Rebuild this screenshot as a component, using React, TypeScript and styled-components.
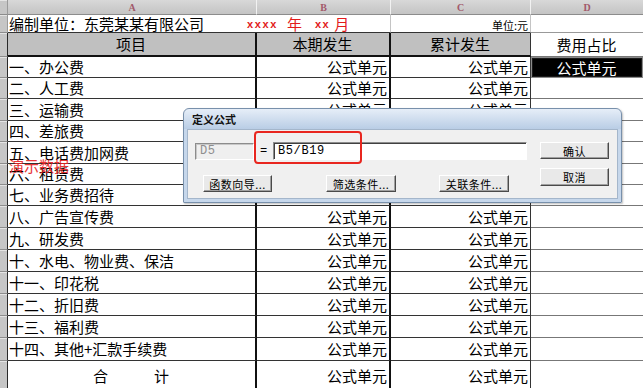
import React from "react";
import styled, { createGlobalStyle } from "styled-components";

const GlobalStyle = createGlobalStyle`
  html, body {
    margin: 0;
    padding: 0;
    background: #fff;
    overflow: hidden;
  }
  body {
    font-family: "Noto Sans CJK SC", "Noto Sans", sans-serif;
  }
`;

// column widths: row header, A, B, C, D
const COLS = "8px 249px 134px 140px 112px";

const Sheet = styled.div`
  position: relative;
  width: 643px;
  height: 388px;
  overflow: hidden;
  background: #fff;
  color: #000;
`;

const Row = styled.div<{ $h: number }>`
  display: grid;
  grid-template-columns: ${COLS};
  height: ${(p) => p.$h}px;
`;

const RowHead = styled.div<{ $light?: boolean }>`
  box-sizing: border-box;
  background: #c6c6c6;
  border-right: 1px solid ${(p) => (p.$light ? "#9a9a9a" : "#2a2a2a")};
  border-bottom: 1px solid #8c8c8c;
  box-shadow: inset 0 1px #e4e4e4;
`;

const ColLetter = styled.div<{ $last?: boolean }>`
  box-sizing: border-box;
  display: flex;
  align-items: center;
  justify-content: center;
  background: linear-gradient(#d8d8d8, #c4c4c4);
  border-right: ${(p) => (p.$last ? "none" : "1px solid #f2f2f2")};
  border-bottom: 1px solid #8c8c8c;
  font-family: "Liberation Serif", serif;
  font-size: 10px;
  font-weight: bold;
  color: #a2596a;
`;

type Align = "left" | "center" | "right";

const Cell = styled.div<{
  $align?: Align;
  $bg?: string;
  $right?: string;
  $bottom?: string;
  $span?: number;
}>`
  box-sizing: border-box;
  display: flex;
  align-items: center;
  justify-content: ${(p) =>
    p.$align === "right" ? "flex-end" : p.$align === "center" ? "center" : "flex-start"};
  grid-column: span ${(p) => p.$span ?? 1};
  padding: 0 2px 0 1px;
  background: ${(p) => p.$bg ?? "#fff"};
  border-right: ${(p) => p.$right ?? "none"};
  border-bottom: ${(p) => p.$bottom ?? "none"};
  font-size: 15px;
  line-height: 16px;
  white-space: nowrap;
`;

const SelectedCell = styled(Cell)`
  background: #000;
  color: #fff;
  border: 1px solid #8a8a8a;
  box-shadow: inset 0 0 0 1px #1a1a1a;
`;

const Company = styled.span`
  width: 238px;
  flex: none;
`;

const DateX = styled.span<{ $ml: number }>`
  margin-left: ${(p) => p.$ml}px;
  font-family: "Liberation Sans", sans-serif;
  font-size: 11px;
  line-height: 12px;
  font-weight: bold;
  letter-spacing: 1.6px;
  color: #e21b1b;
  align-self: flex-end;
  padding-bottom: 2px;
`;

const DateWord = styled.span<{ $ml: number }>`
  margin-left: ${(p) => p.$ml}px;
  font-size: 15px;
  color: #e21b1b;
`;

const Unit = styled.span`
  font-size: 11px;
  line-height: 12px;
  padding-top: 3px;
`;

const Total = styled.div`
  display: flex;
  gap: 46px;
`;

const Watermark = styled.div`
  position: absolute;
  left: 9px;
  top: 157px;
  font-size: 15px;
  line-height: 18px;
  color: #e62020;
  opacity: 0.9;
  pointer-events: none;
`;

/* ---------- dialog ---------- */

const Dialog = styled.div`
  position: absolute;
  left: 183px;
  top: 108px;
  width: 439px;
  height: 95px;
  box-sizing: border-box;
  display: flex;
  flex-direction: column;
  padding: 0 3px 3px;
  border: 1px solid #7890ab;
  border-radius: 6px 6px 1px 1px;
  background: linear-gradient(#e6eef8 0px, #b9cde5 20px, #c6d7eb 20px);
  box-shadow: 1px 1px 2px rgba(0, 0, 0, 0.25);
`;

const TitleBar = styled.div`
  height: 20px;
  display: flex;
  align-items: center;
  padding-left: 5px;
  font-size: 11px;
  font-weight: bold;
  color: #111;
`;

const DialogBody = styled.div`
  position: relative;
  flex: 1;
  display: flex;
  padding: 12px 0 0 7px;
  background: #f0f0f0;
  border: 1px solid #a4b6cb;
`;

const LeftPane = styled.div`
  display: flex;
  flex-direction: column;
`;

const FieldRow = styled.div`
  display: flex;
  align-items: center;
  height: 18px;
`;

const Field = styled.div<{ $disabled?: boolean; $w: number }>`
  box-sizing: border-box;
  width: ${(p) => p.$w}px;
  height: ${(p) => (p.$disabled ? 17 : 18)}px;
  display: flex;
  align-items: center;
  padding-left: 4px;
  background: ${(p) => (p.$disabled ? "#efefef" : "#fff")};
  border-top: 1px solid #8c8c8c;
  border-left: 1px solid #8c8c8c;
  border-right: 1px solid #fff;
  border-bottom: 1px solid #fff;
  box-shadow: inset 1px 1px ${(p) => (p.$disabled ? "#c8c8c8" : "#404040")};
  font-family: "Liberation Mono", monospace;
  font-size: 12px;
  letter-spacing: 0.6px;
  color: ${(p) => (p.$disabled ? "#8e8e8e" : "#000")};
`;

const Equals = styled.span`
  width: 19px;
  text-align: center;
  font-family: "Liberation Mono", monospace;
  font-size: 12px;
`;

const ButtonRow = styled.div`
  display: flex;
  margin-top: 15px;
  padding-left: 8px;
`;

const Button = styled.button<{ $w: number; $h?: number; $ml?: number }>`
  box-sizing: border-box;
  width: ${(p) => p.$w}px;
  height: ${(p) => p.$h ?? 17}px;
  margin: 0 0 0 ${(p) => p.$ml ?? 0}px;
  padding: 0;
  display: flex;
  align-items: center;
  justify-content: center;
  background: #e9e9e9;
  border: 1px solid;
  border-color: #ffffff #4a4a4a #4a4a4a #ffffff;
  box-shadow: inset -1px -1px #a0a0a0;
  font-family: "Noto Sans CJK SC", sans-serif;
  font-size: 11px;
  letter-spacing: 0.5px;
  color: #000;
`;

const RightPane = styled.div`
  display: flex;
  flex-direction: column;
  gap: 9px;
  margin-left: 13px;
`;

const Highlight = styled.div`
  position: absolute;
  left: 66px;
  top: 1px;
  width: 108px;
  height: 33px;
  box-sizing: border-box;
  border: 2px solid #e8261f;
  border-radius: 4px;
  pointer-events: none;
`;

const items = [
  "一、办公费",
  "二、人工费",
  "三、运输费",
  "四、差旅费",
  "五、电话费加网费",
  "六、租赁费",
  "七、业务费招待",
  "八、广告宣传费",
  "九、研发费",
  "十、水电、物业费、保洁",
  "十一、印花税",
  "十二、折旧费",
  "十三、福利费",
  "十四、其他+汇款手续费",
];

const heights = [21, 21, 22, 21, 22, 21, 21, 22, 22, 22, 22, 22, 22, 23];

const DARK = "2px solid #111";
const LINE = "1px solid #333";
const SOFT = "1px solid #777";

const App: React.FC = () => {
  return (
    <>
      <GlobalStyle />
      <Sheet>
        <Row $h={15}>
          <RowHead $light />
          <ColLetter>A</ColLetter>
          <ColLetter>B</ColLetter>
          <ColLetter>C</ColLetter>
          <ColLetter $last>D</ColLetter>
        </Row>

        <Row $h={18}>
          <RowHead $light />
          <Cell $span={2} $right="1px solid #c4c4c4" $bottom={LINE}>
            <Company>编制单位：东莞某某有限公司</Company>
            <DateX $ml={0}>xxxx</DateX>
            <DateWord $ml={9}>年</DateWord>
            <DateX $ml={13}>xx</DateX>
            <DateWord $ml={4}>月</DateWord>
          </Cell>
          <Cell $align="right" $right="1px solid #c4c4c4" $bottom={LINE}>
            <Unit>单位:元</Unit>
          </Cell>
          <Cell $bottom="1px solid #999" />
        </Row>

        <Row $h={24}>
          <RowHead />
          <Cell $align="center" $bg="#c0c0c0" $right={DARK} $bottom={DARK}>
            项目
          </Cell>
          <Cell $align="center" $bg="#c0c0c0" $right={DARK} $bottom={DARK}>
            本期发生
          </Cell>
          <Cell $align="center" $bg="#c0c0c0" $right={LINE} $bottom={DARK}>
            累计发生
          </Cell>
          <Cell $align="center" $bottom={SOFT}>
            费用占比
          </Cell>
        </Row>

        {items.map((item, i) => (
          <Row key={item} $h={heights[i]}>
            <RowHead />
            <Cell $right={DARK} $bottom={LINE}>
              {item}
            </Cell>
            <Cell $align="right" $right={DARK} $bottom={LINE}>
              公式单元
            </Cell>
            <Cell $align="right" $right={LINE} $bottom={LINE}>
              公式单元
            </Cell>
            {i === 0 ? (
              <SelectedCell $align="center">公式单元</SelectedCell>
            ) : (
              <Cell $bottom={SOFT} />
            )}
          </Row>
        ))}

        <Row $h={30}>
          <RowHead />
          <Cell $align="center" $right={DARK}>
            <Total>
              <span>合</span>
              <span>计</span>
            </Total>
          </Cell>
          <Cell $align="right" $right={DARK}>
            公式单元
          </Cell>
          <Cell $align="right" $right={LINE}>
            公式单元
          </Cell>
          <Cell />
        </Row>

        <Watermark>演示数据</Watermark>

        <Dialog>
          <TitleBar>定义公式</TitleBar>
          <DialogBody>
            <LeftPane>
              <FieldRow>
                <Field $disabled $w={59}>
                  D5
                </Field>
                <Equals>=</Equals>
                <Field $w={254}>B5/B19</Field>
              </FieldRow>
              <ButtonRow>
                <Button $w={69}>函数向导...</Button>
                <Button $w={70} $ml={54}>
                  筛选条件...
                </Button>
                <Button $w={70} $ml={43}>
                  关联条件...
                </Button>
              </ButtonRow>
            </LeftPane>
            <RightPane>
              <Button $w={69}>确认</Button>
              <Button $w={69} $h={18}>
                取消
              </Button>
            </RightPane>
            <Highlight />
          </DialogBody>
        </Dialog>
      </Sheet>
    </>
  );
};

export default App;
